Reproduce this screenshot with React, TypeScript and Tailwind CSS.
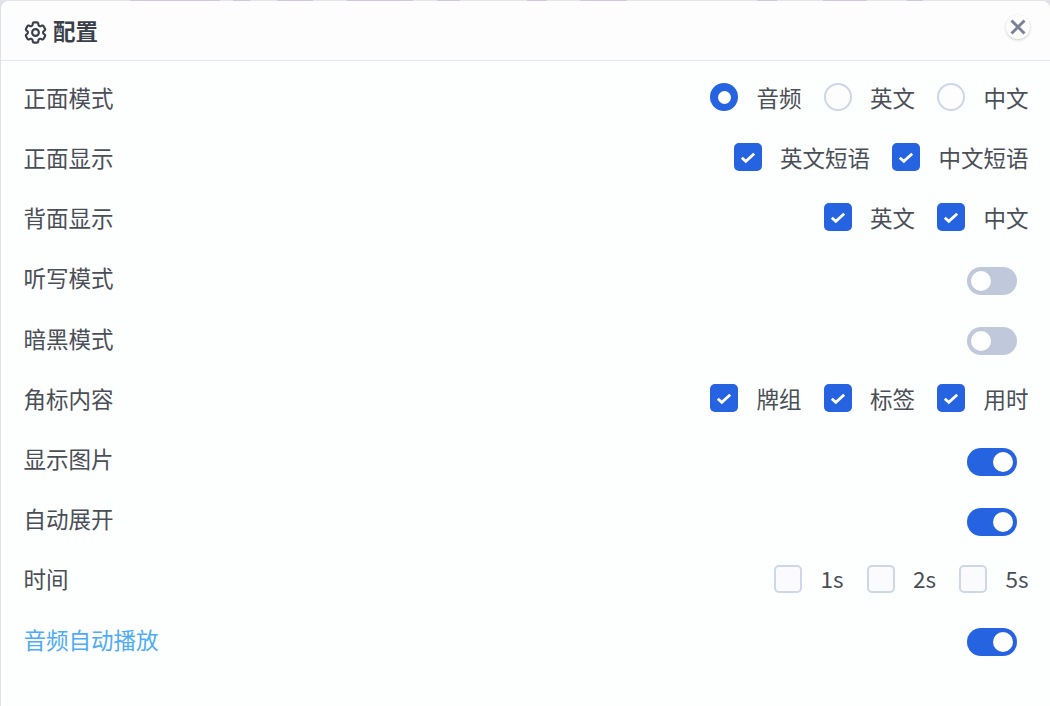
import { HiOutlineCog6Tooth } from "react-icons/hi2";

const Radio = ({ checked }: { checked?: boolean }) =>
  checked ? (
    <span className="flex items-center justify-center w-[28px] h-[28px] rounded-full bg-[#2563e0]">
      <span className="w-[13px] h-[13px] rounded-full bg-white" />
    </span>
  ) : (
    <span className="w-[28px] h-[28px] rounded-full border-2 border-[#cfd6e7] bg-[#fdfdfe]" />
  );

const Check = ({ checked }: { checked?: boolean }) =>
  checked ? (
    <span className="flex items-center justify-center w-[28px] h-[28px] rounded-[5px] bg-[#2563e0]">
      <svg width="16" height="13" viewBox="0 0 16 13" fill="none">
        <path d="M1.8 6.8L5.8 10.4L14.2 2.8" stroke="white" strokeWidth="2.8" />
      </svg>
    </span>
  ) : (
    <span className="w-[28px] h-[28px] rounded-[5px] border-2 border-[#cfd6e7] bg-[#fbfbfd]" />
  );

const Toggle = ({ on }: { on?: boolean }) => (
  <span
    className={
      on
        ? "flex items-center justify-end w-[50px] h-[28px] px-[4px] rounded-full bg-[#2563e0]"
        : "flex items-center justify-start w-[50px] h-[28px] px-[4px] rounded-full bg-[#c0c9dc]"
    }
  >
    <span className="w-[20px] h-[20px] rounded-full bg-white" />
  </span>
);

const Options = ({
  items,
  type,
  wide,
}: {
  items: { label: string; on?: boolean }[];
  type: "radio" | "check";
  wide?: boolean;
}) => (
  <div className={wide ? "flex items-center gap-[23.5px]" : "flex items-center gap-[22.5px]"}>
    {items.map((item) => (
      <div key={item.label} className="flex items-center gap-[18px]">
        {type === "radio" ? <Radio checked={item.on} /> : <Check checked={item.on} />}
        <span>{item.label}</span>
      </div>
    ))}
  </div>
);

const Row = ({ label, blue, children }: { label: string; blue?: boolean; children: React.ReactNode }) => (
  <div className="flex items-center justify-between h-[60.2px]">
    <span className={blue ? "text-[#4dabf7]" : ""}>{label}</span>
    {children}
  </div>
);

const SwitchWrap = ({ on }: { on?: boolean }) => (
  <div className="pr-[12px] pt-[7px]">
    <Toggle on={on} />
  </div>
);

export default function App() {
  return (
    <div className="flex flex-col w-[1050px] h-[706px] overflow-hidden bg-[#dfdfe8] font-['Noto_Sans_CJK_SC','Noto_Sans',sans-serif] text-[22.5px] leading-none text-[#4a4e57]">
      <div className="h-[1px] shrink-0 bg-[linear-gradient(90deg,#e4e3ee_130px,#d5c6dd_130px,#d5c6dd_220px,#e4e3ee_220px,#e4e3ee_233px,#d5c6dd_233px,#d5c6dd_250px,#e4e3ee_250px,#e4e3ee_277px,#d5c6dd_277px,#d5c6dd_313px,#e4e3ee_313px,#e4e3ee_347px,#d5c6dd_347px,#d5c6dd_413px,#e4e3ee_413px,#e4e3ee_437px,#d5c6dd_437px,#d5c6dd_460px,#e4e3ee_460px,#e4e3ee_527px,#d5c6dd_527px,#d5c6dd_547px,#e4e3ee_547px,#e4e3ee_580px,#d5c6dd_580px,#d5c6dd_627px,#e4e3ee_627px,#e4e3ee_757px,#d5c6dd_757px,#d5c6dd_777px,#e4e3ee_777px,#e4e3ee_823px,#d5c6dd_823px,#d5c6dd_867px,#e4e3ee_867px,#e4e3ee_907px,#d5c6dd_907px,#d5c6dd_923px,#e4e3ee_923px)]" />
      <div className="flex-1 ml-[1px] rounded-t-[8px] bg-[#fdfefe]">
        <div className="relative flex items-center h-[60px] pl-[21px] gap-[4px] border-b border-[#e5e7f0] rounded-t-[8px] bg-[#fdfdfe]">
          <HiOutlineCog6Tooth size={27} strokeWidth={1.9} className="mt-[3px] text-[#3a3f4a]" />
          <span className="font-bold text-[#3a3f4a]">配置</span>
          <button className="absolute right-[20px] top-[14px] flex items-center justify-center w-[24px] h-[24px] rounded-full bg-white shadow-[0_1px_3px_rgba(0,0,0,0.2)]">
            <svg width="16" height="16" viewBox="0 0 16 16" fill="none">
              <path d="M1.5 1.5L14.5 14.5M14.5 1.5L1.5 14.5" stroke="#7a8299" strokeWidth="3" />
            </svg>
          </button>
        </div>
        <div className="pt-[6px] pl-[22.5px] pr-[21.5px]">
          <Row label="正面模式">
            <Options type="radio" items={[{ label: "音频", on: true }, { label: "英文" }, { label: "中文" }]} />
          </Row>
          <Row label="正面显示">
            <Options type="check" items={[{ label: "英文短语", on: true }, { label: "中文短语", on: true }]} />
          </Row>
          <Row label="背面显示">
            <Options type="check" items={[{ label: "英文", on: true }, { label: "中文", on: true }]} />
          </Row>
          <Row label="听写模式">
            <SwitchWrap />
          </Row>
          <Row label="暗黑模式">
            <SwitchWrap />
          </Row>
          <Row label="角标内容">
            <Options type="check" items={[{ label: "牌组", on: true }, { label: "标签", on: true }, { label: "用时", on: true }]} />
          </Row>
          <Row label="显示图片">
            <SwitchWrap on />
          </Row>
          <Row label="自动展开">
            <SwitchWrap on />
          </Row>
          <Row label="时间">
            <Options wide type="check" items={[{ label: "1s" }, { label: "2s" }, { label: "5s" }]} />
          </Row>
          <Row label="音频自动播放" blue>
            <SwitchWrap on />
          </Row>
        </div>
      </div>
    </div>
  );
}
